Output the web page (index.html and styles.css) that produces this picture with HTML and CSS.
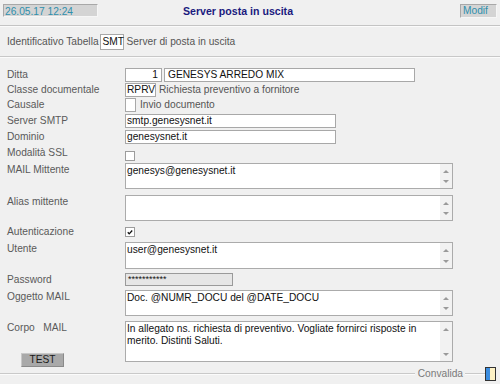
FILE: index.html
```html
<!DOCTYPE html>
<html lang="it">
<head>
<meta charset="utf-8">
<title>Server posta in uscita</title>
<link rel="stylesheet" href="styles.css">
</head>
<body>
<div class="page">
  <header class="topbar">
    <div class="stamp">26.05.17 12:24</div>
    <div class="title">Server posta in uscita</div>
    <div class="mode">Modif</div>
  </header>

  <section class="ident">
    <span class="lbl">Identificativo Tabella</span>
    <span class="box code">SMT</span>
    <span class="lbl desc">Server di posta in uscita</span>
  </section>

  <main class="form">
    <div class="row r-ditta">
      <div class="label">Ditta</div>
      <div class="fields">
        <span class="box num">1</span>
        <span class="box wide">GENESYS ARREDO MIX</span>
      </div>
    </div>
    <div class="row g1">
      <div class="label">Classe documentale</div>
      <div class="fields">
        <span class="box code2">RPRV</span>
        <span class="lbl desc2">Richiesta preventivo a fornitore</span>
      </div>
    </div>
    <div class="row g1">
      <div class="label">Causale</div>
      <div class="fields">
        <span class="box tiny"></span>
        <span class="lbl desc3">Invio documento</span>
      </div>
    </div>
    <div class="row g2">
      <div class="label">Server SMTP</div>
      <div class="fields"><span class="box mid">smtp.genesysnet.it</span></div>
    </div>
    <div class="row g2">
      <div class="label">Dominio</div>
      <div class="fields"><span class="box mid">genesysnet.it</span></div>
    </div>
    <div class="row g2">
      <div class="label">Modalità SSL</div>
      <div class="fields"><span class="check low"></span></div>
    </div>
    <div class="row g2">
      <div class="label">MAIL Mittente</div>
      <div class="fields">
        <div class="area"><div class="text">genesys@genesysnet.it</div><div class="sb"><i class="up"></i><i class="dn"></i></div></div>
      </div>
    </div>
    <div class="row g6">
      <div class="label">Alias mittente</div>
      <div class="fields">
        <div class="area"><div class="text"></div><div class="sb"><i class="up"></i><i class="dn"></i></div></div>
      </div>
    </div>
    <div class="row g4">
      <div class="label">Autenticazione</div>
      <div class="fields"><span class="check on">
        <svg width="9" height="9" viewBox="0 0 9 9"><path d="M2 4.2 L3.6 6 L7 2.2" fill="none" stroke="#111" stroke-width="1.5"/></svg>
      </span></div>
    </div>
    <div class="row g3">
      <div class="label">Utente</div>
      <div class="fields">
        <div class="area a27"><div class="text">user@genesysnet.it</div><div class="sb"><i class="up"></i><i class="dn"></i></div></div>
      </div>
    </div>
    <div class="row g4">
      <div class="label">Password</div>
      <div class="fields"><span class="box pwd">***********</span></div>
    </div>
    <div class="row g3">
      <div class="label">Oggetto MAIL</div>
      <div class="fields">
        <div class="area"><div class="text">Doc. @NUMR_DOCU del @DATE_DOCU</div><div class="sb"><i class="up"></i><i class="dn"></i></div></div>
      </div>
    </div>
    <div class="row g5">
      <div class="label stack">
        <span>Corpo&nbsp;&nbsp; MAIL</span>
        <button class="test">TEST</button>
      </div>
      <div class="fields">
        <div class="area big"><div class="text">In allegato ns. richiesta di preventivo. Vogliate fornirci risposte in<br>merito. Distinti Saluti.</div><div class="sb"><i class="up"></i><i class="dn"></i></div></div>
      </div>
    </div>
  </main>

  <footer class="foot">
    <span class="rule"></span>
    <span class="conv">Convalida</span>
    <span class="rule short"></span>
    <span class="flag"><span class="blue"></span><span class="cream"></span></span>
  </footer>
</div>
</body>
</html>
```

FILE: styles.css
```css
* { box-sizing: border-box; }
html, body {
  margin: 0;
  padding: 0;
  background: #f0f0f0;
}
body {
  font-family: "Liberation Sans", Arial, sans-serif;
  font-size: 10.2px;
  color: #111;
  width: 500px;
  height: 384px;
  overflow: hidden;
}
.page {
  display: flex;
  flex-direction: column;
  height: 384px;
}

/* header */
.topbar {
  display: flex;
  align-items: flex-start;
  height: 26px;
  padding: 4px 3px 0 3px;
  border-bottom: 1px solid #c4c4c4;
  box-shadow: 0 1px 0 #fbfbfb;
}
.stamp, .mode {
  height: 13px;
  line-height: 13px;
  background: #d4d4d4;
  color: #2f8fac;
  border: 1px solid;
  border-color: #a8a8a8 #f6f6f6 #f6f6f6 #a8a8a8;
  padding-left: 1px;
}
.stamp { width: 95px; }
.mode { width: 37px; margin-left: auto; padding-left: 2px; height: 14px; line-height: 12px; }
.title {
  flex: 1;
  text-align: center;
  padding-right: 82px;
  font-weight: bold;
  font-size: 10.6px;
  color: #1a1a7e;
  line-height: 14px;
}

/* ident */
.ident {
  display: flex;
  align-items: center;
  height: 32px;
  padding: 2px 0 0 7px;
  border-bottom: 1px solid #c8c8c8;
  box-shadow: 0 1px 0 #fbfbfb;
}
.lbl { color: #555; white-space: nowrap; }
.box {
  display: inline-block;
  height: 14px;
  line-height: 12px;
  background: #fff;
  border: 1px solid #a8a8a8;
  color: #111;
  padding: 0 2px;
  white-space: nowrap;
}
.code { width: 24px; height: 16px; line-height: 14px; margin: 0 2px 0 1px; padding: 0 1px 0 2px; }
.desc { margin-left: 1px; }

/* form */
.form {
  display: flex;
  flex-direction: column;
  padding: 11px 0 0 7px;
}
.row {
  display: flex;
  align-items: flex-start;
}
.g1 { margin-top: 1px; }
.g2 { margin-top: 2px; }
.g3 { margin-top: 3px; }
.g4 { margin-top: 4px; }
.g5 { margin-top: 5px; }
.g6 { margin-top: 6px; }

.label {
  width: 118px;
  flex: none;
  color: #5a5a5a;
  line-height: 14px;
  white-space: nowrap;
}
.label.stack {
  display: flex;
  flex-direction: column;
  align-items: flex-start;
}
.fields {
  display: flex;
  align-items: flex-start;
  gap: 2px;
}
.num { width: 37px; text-align: right; padding-right: 3px; }
.wide { width: 251px; padding-left: 3px; }
.code2 { width: 31px; padding-left: 1px; }
.desc2 { line-height: 14px; margin-left: 1px; }
.tiny { width: 11px; }
.desc3 { line-height: 14px; margin-left: 2px; }
.mid { width: 211px; padding-left: 1px; }
.pwd {
  width: 108px;
  height: 13px;
  background: #e6e6e6;
  border-color: #9a9a9a;
  font-size: 9px;
  line-height: 10px;
  padding-left: 2px;
}

.check {
  display: inline-flex;
  align-items: center;
  justify-content: center;
  width: 10px;
  height: 10px;
  background: #fff;
  border: 1px solid #9c9c9c;
}
.check.low { margin-top: 5px; }
.check.on { margin-top: 2px; }

.area {
  display: flex;
  width: 328px;
  height: 26px;
  background: #fff;
  border: 1px solid #ababab;
}
.area.a27 { height: 27px; }
.area.big { height: 41px; }
.area .text {
  flex: 1;
  padding: 1px 0 0 1px;
  line-height: 12px;
  color: #111;
  white-space: nowrap;
  overflow: hidden;
}
.sb {
  width: 12px;
  flex: none;
  background: #f2f2f2;
  display: flex;
  flex-direction: column;
  justify-content: space-between;
  align-items: center;
  padding: 6px 0 5px;
}
.sb i {
  display: block;
  width: 0;
  height: 0;
  border-left: 3px solid transparent;
  border-right: 3px solid transparent;
}
.sb .up { border-bottom: 3px solid #9a9a9a; }
.sb .dn { border-top: 3px solid #9a9a9a; }

.test {
  margin: 18px 0 0 14px;
  width: 43px;
  height: 14px;
  padding: 0;
  font-family: inherit;
  font-size: 10.2px;
  line-height: 12px;
  color: #1a1a1a;
  background: #a9a9a9;
  border: 1px solid;
  border-color: #c8c8c8 #8a8a8a #8a8a8a #c8c8c8;
}

/* footer */
.foot {
  margin-top: auto;
  display: flex;
  align-items: center;
  height: 14px;
  margin-bottom: 3px;
  padding-right: 4px;
}
.rule {
  flex: 1;
  height: 2px;
  background: #c9c9c9;
  border-bottom: 1px solid #fbfbfb;
}
.rule.short { flex: none; width: 20px; }
.conv { color: #7a7a7a; padding: 0 2px 0 3px; line-height: 12px; }
.flag {
  display: flex;
  width: 11px;
  height: 14px;
  border: 1px solid #333;
}
.flag .blue { width: 4px; background: #3b8de0; }
.flag .cream { flex: 1; background: #fdf1c4; }
```
